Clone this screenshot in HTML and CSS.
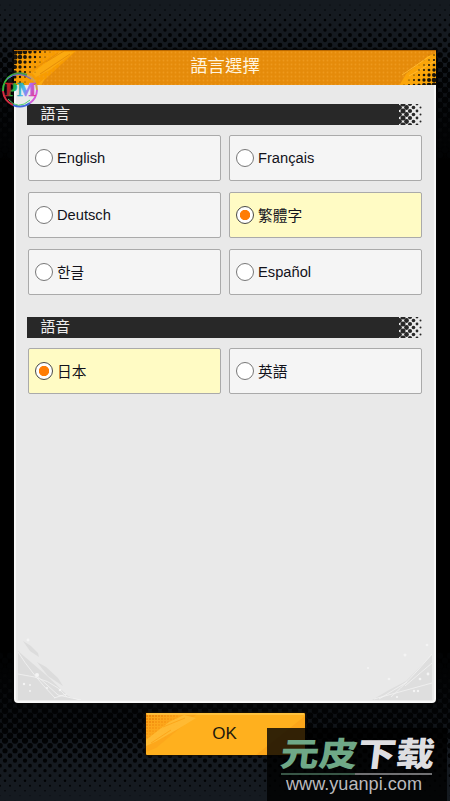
FILE: index.html
```
<!DOCTYPE html>
<html lang="zh-Hant">
<head>
<meta charset="utf-8">
<title>語言選擇</title>
<link rel="stylesheet" href="styles.css">
</head>
<body>
<svg class="backdrop" id="backdrop" width="450" height="801">
  <defs>
    <linearGradient id="band-top" x2="0" y2="1"><stop offset=".4" stop-color="#151a20"/><stop offset="1" stop-color="#000"/></linearGradient>
    <linearGradient id="band-bottom" x2="0" y2="1"><stop stop-color="#000"/><stop offset=".6" stop-color="#151a20"/></linearGradient>
  </defs>
</svg>
<main class="screen">
  <section class="dialog">
    <header class="title-bar">
      <svg class="title-art" width="422" height="35" viewBox="0 0 422 35">
        <defs><pattern id="mesh" width="4" height="4" patternUnits="userSpaceOnUse"><circle cx="1.5" cy="1.5" r=".9" fill="#f29f25"/></pattern></defs>
        <path d="M0 0H62L24 35H0z" fill="#f79b00"/>
        <rect width="422" height="35" fill="url(#mesh)" opacity=".7"/>
        <path d="M18 22L46 1H60L36 19L22 26zM24 33L31 27L27 35z" fill="#fbab12" opacity=".85"/>
        <path d="M32 11L50 0M26 23L56 3M20 18L44 2" stroke="#e78e08"/>
        <path d="M385 35L392 23L414 5L422 2V35z" fill="#fba509"/>
        <path d="M388 24L416 5M395 25L421 10" stroke="#ffb72d"/>
        <g id="title-dots" fill="#17130c"></g>
      </svg>
      <h1>語言選擇</h1>
    </header>
    <div class="content">
      <h2 class="section-title">語言<svg class="fade" width="24" height="21"></svg></h2>
      <div class="options">
        <div class="option"><i class="radio"></i>English</div>
        <div class="option"><i class="radio"></i>Français</div>
        <div class="option"><i class="radio"></i>Deutsch</div>
        <div class="option selected cjk"><i class="radio"></i><span>繁體字</span></div>
        <div class="option cjk"><i class="radio"></i><span>한글</span></div>
        <div class="option"><i class="radio"></i>Español</div>
      </div>
      <h2 class="section-title voice">語音<svg class="fade" width="24" height="21"></svg></h2>
      <div class="options">
        <div class="option selected cjk"><i class="radio"></i><span>日本</span></div>
        <div class="option cjk"><i class="radio"></i><span>英語</span></div>
      </div>
    </div>
    <svg class="corner left" width="70" height="62" viewBox="0 0 70 62">
      <path d="M0 13L28 37L50 58L60 62H0z" fill="#dcdcdc"/>
      <path d="M5 3L13 8L20 15L21 19L12 13zM19 24L28 29L40 40L45 48L30 38z" fill="#dcdcdc"/>
      <path d="M0 14Q13 35 37 60M0 36Q35 40 49 59M18 37L40 57L63 62M36 60L49 56" fill="none" stroke="#f2f2f2" stroke-width=".8"/>
      <g fill="#f4f4f4"><circle cx="10" cy="2" r="1.4"/><circle cx="19" cy="37" r="2"/><circle cx="6" cy="46" r="1.2"/><circle cx="12" cy="47" r="1"/><circle cx="29" cy="50" r="1"/><circle cx="42" cy="52" r="1.3"/><circle cx="12" cy="53" r="1"/></g>
    </svg>
    <svg class="corner right" width="70" height="62" viewBox="0 0 70 62">
      <path d="M70 17L44 43L27 52L10 62H70z" fill="#dedede"/>
      <path d="M70 16Q47 43 29 59M70 25L43 48M12 61L70 45M17 61L45 44" fill="none" stroke="#f2f2f2" stroke-width=".8"/>
      <g fill="#f4f4f4"><circle cx="65" cy="7" r="1.3"/><circle cx="43" cy="17" r="1.5"/><circle cx="6" cy="30" r="1"/><circle cx="27" cy="41" r="1.3"/><circle cx="66" cy="36" r="1.4"/><circle cx="58" cy="41" r="1.3"/><circle cx="52" cy="53" r="1.2"/><circle cx="56" cy="53" r="1.2"/><circle cx="35" cy="59" r="1.1"/></g>
    </svg>
  </section>
  <button class="confirm">
    <svg class="button-art" width="159" height="42" viewBox="0 0 159 42">
      <path d="M0 0H52L10 35L0 39z" fill="#fda71b"/>
      <g id="button-dots" fill="#ed850b"></g>
      <path d="M0 27L23 9L38 2L50 5L32 16L9 29L0 33z" fill="#ffbd37" opacity=".85"/>
      <path d="M5 30L25 17M17 14L39 5" stroke="#fda71b"/>
      <path d="M110 42L159 3V42z" fill="#fba51a"/>
      <path d="M1 1H158" stroke="#ffd35d"/>
    </svg>
    <span>OK</span>
  </button>
</main>
<svg class="badge" width="38" height="38" viewBox="0 0 38 38">
  <defs><linearGradient id="rainbow" gradientUnits="userSpaceOnUse" x1="4" x2="36" y1="12" y2="22"><stop stop-color="#d81f22"/><stop offset=".2" stop-color="#a8202a"/><stop offset=".28" stop-color="#22b43c"/><stop offset=".42" stop-color="#22a49a"/><stop offset=".58" stop-color="#4bb8f0"/><stop offset=".75" stop-color="#b06af0"/><stop offset="1" stop-color="#f0307a"/></linearGradient></defs>
  <g fill="none" stroke-width="2">
    <path d="M2 20A17 17 0 0 1 11 4" stroke="#37bd3d"/><path d="M11 4A17 17 0 0 1 26 4" stroke="#3f9a4c"/><path d="M26 4A17 17 0 0 1 36 19" stroke="#d4a04b"/><path d="M36 19A17 17 0 0 1 29 32" stroke="#d45adb"/><path d="M29 32A17 17 0 0 1 12 34" stroke="#4369db"/><path d="M12 34A17 17 0 0 1 2 20" stroke="#d52d43"/>
  </g>
  <path d="M6 8Q18-1 30 8" fill="none" stroke="#6a5fdf"/><path d="M7 28Q17 40 29 29" fill="none" stroke="#4fd06a"/>
  <text x="4" y="25" textLength="31" lengthAdjust="spacingAndGlyphs">PM</text>
</svg>
<svg class="watermark" width="180" height="73" viewBox="0 0 180 73">
  <rect width="180" height="73" fill="#000" opacity=".8"/>
  <text class="brand" x="17" y="38.5" transform="skewX(-7)" textLength="154" lengthAdjust="spacingAndGlyphs"><tspan class="green">元皮</tspan><tspan>下载</tspan></text>
  <path d="M14 46H88" stroke="#6fa887"/><path d="M88 46H165" stroke="#dedee1"/>
  <text class="site" x="19" y="62" textLength="136" lengthAdjust="spacingAndGlyphs">www.yuanpi.com</text>
</svg>
<script src="script.js"></script>
</body>
</html>
```
FILE: styles.css
```
* { box-sizing: border-box; }
body { margin: 0; width: 450px; height: 801px; overflow: hidden; position: relative; background: #000; font-family: "Liberation Sans", "Noto Sans CJK TC", "Noto Sans CJK KR", sans-serif; }
.backdrop { position: absolute; inset: 0; }
.screen { position: relative; display: flex; flex-direction: column; align-items: center; padding-top: 50px; height: 801px; }
.dialog { position: relative; width: 422px; height: 653px; border: 2px solid #f8f8f8; border-top: 0; border-radius: 0 0 4px 4px; background: #e9e9e9; box-shadow: 0 0 2px 1px #080808; display: flex; flex-direction: column; }
.title-bar { position: relative; height: 35px; margin: 0 -2px; background: #e58b0a; overflow: hidden; border-top: 1px solid #b96800; display: flex; align-items: center; justify-content: center; }
.title-art, .button-art { position: absolute; left: 0; top: 0; }
h1 { position: relative; margin: 0; padding-bottom: 3px; color: #fff4df; font-size: 17.4px; line-height: 31px; font-weight: 400; }
.content { padding: 19px 12px 0 11px; }
.section-title { display: flex; align-items: center; justify-content: space-between; margin: 0 0 10px; width: 395px; height: 21px; padding-left: 13.5px; background: linear-gradient(90deg, #282828 372px, transparent 372px); color: #eee; font-size: 14.8px; font-weight: 400; line-height: 21px; }
.voice { margin-top: 22px; }
.options { display: grid; grid-template-columns: 193px 193px; column-gap: 8px; row-gap: 11px; padding-left: .5px; }
.option { display: flex; align-items: center; gap: 4px; height: 46px; padding: 0 0 0 6.5px; border: 1px solid #aaa; border-radius: 2px; background: #f5f5f5; color: #12121a; font-size: 14.7px; }
.cjk span { padding-bottom: 2px; }
.selected { background: #fffbc4; }
.radio { width: 18px; height: 18px; flex: none; border: 1.5px solid #777; border-radius: 50%; background: #fff; }
.selected .radio { border-color: #484848; background: radial-gradient(circle, #ff7d05 4.8px, #fff 5.5px); }
.corner { position: absolute; bottom: 1px; }
.left { left: 2px; }
.right { right: 2px; }
.confirm { position: relative; width: 159px; height: 42px; margin: 10px 0 0; padding: 0 1px 0 0; border: 0; border-radius: 1px; background: #ffb01e; color: #23190c; font: 17px "Liberation Sans", sans-serif; box-shadow: 0 0 2px 1px #1b1205; }
.confirm span { position: relative; }
.badge { position: absolute; left: 1px; top: 71px; }
.badge text { font: bold 19px "Liberation Serif", serif; fill: url(#rainbow); stroke: url(#rainbow); stroke-width: .7px; }
.watermark { position: absolute; left: 267px; top: 728px; overflow: visible; }
.brand { font: 900 33px "Noto Sans CJK SC", sans-serif; fill: #dedee1; }
.green { fill: #6fa887; }
.site { font: 18.5px "Liberation Sans", sans-serif; fill: #bababd; }
```
FILE: script.js
```
const NS = "http://www.w3.org/2000/svg";
function add(parent, tag, attrs) {
  const el = document.createElementNS(NS, tag);
  Object.entries(attrs).forEach(([k, v]) => el.setAttribute(k, v));
  parent.append(el);
  return el;
}

// Halftone bands fade into black toward the middle of the screen.
const backdrop = document.getElementById("backdrop");
add(backdrop, "rect", { width: 450, height: 160, fill: "url(#band-top)" });
add(backdrop, "rect", { y: 660, width: 450, height: 141, fill: "url(#band-bottom)" });
function halftone(start, end, distance, shift) {
  for (let y = start, row = 0; y < end; y += 5, row++) {
    const r = Math.min(3.2, 0.3 + distance(y) * 0.046);
    for (let x = (row + shift) % 2 * 5; x <= 450; x += 10) {
      add(backdrop, "circle", { cx: x, cy: y, r, fill: "#020304" });
    }
  }
}
halftone(5, 160, y => y, 0);
halftone(655.7, 801, y => 800 - y, 0);

document.querySelectorAll(".fade").forEach(svg => {
  for (let col = 0; col < 7; col++) {
    for (let y = col % 2 ? 0 : 3.5; y < 23; y += 7) {
      add(svg, "circle", { cx: 1.5 + col * 3.5, cy: y, r: [2.4, 2.5, 2.4, 2.1, 1.8, 1.4, 1][col], fill: "#282828" });
    }
  }
});

function cornerDots(id, x0, x1, y0, y1, radius) {
  const group = document.getElementById(id);
  for (let x = x0; x < x1; x += 5) for (let y = y0; y < y1; y += 5) {
    const r = radius(x, y);
    if (r > 0.3) add(group, "circle", { cx: x, cy: y, r });
  }
}
cornerDots("title-dots", 1, 40, 1, 35, (x, y) => Math.min(2.6, 3 - x * 0.07 - y * 0.055));
cornerDots("title-dots", 380, 422, 4, 36, (x, y) => Math.min(2.5, 2.6 - (419 - x) * 0.07 - (34 - y) * 0.065));
const buttonDots = document.getElementById("button-dots");
for (let x = 1; x < 34; x += 3) for (let y = 3; y < 25; y += 3) {
  const r = 1.3 - x * 0.02 - y * 0.03;
  if (r > 0.2) add(buttonDots, "circle", { cx: x, cy: y, r });
}
```
